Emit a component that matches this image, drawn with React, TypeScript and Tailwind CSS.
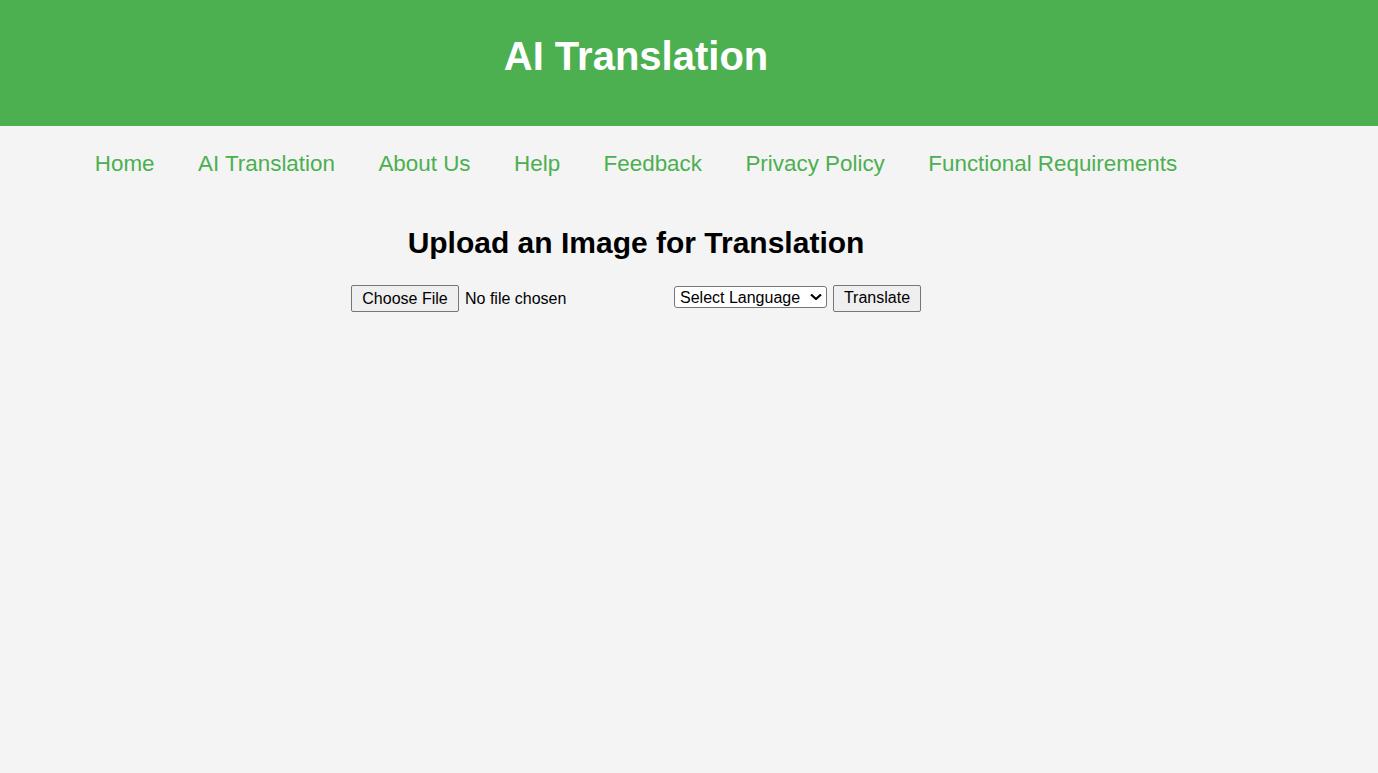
import { useState } from "react";

const navLinks = [
  "Home",
  "AI Translation",
  "About Us",
  "Help",
  "Feedback",
  "Privacy Policy",
  "Functional Requirements",
];

export default function App() {
  const [language, setLanguage] = useState("");

  return (
    <div className="min-h-screen bg-[#f4f4f4] font-['Liberation_Sans',Arial,sans-serif] text-black">
      <header className="h-[126px] bg-[#4caf50] pr-[106px] pt-[33px]">
        <h1 className="text-center text-[40px] font-bold leading-[46px] text-white">
          AI Translation
        </h1>
      </header>

      <nav className="flex justify-center gap-[43.5px] pr-[106px] pt-[25px]">
        {navLinks.map((link) => (
          <a
            key={link}
            href="#"
            className="text-[22.4px] leading-[26px] text-[#4caf50]"
          >
            {link}
          </a>
        ))}
      </nav>

      <main className="pr-[106px]">
        <h2 className="mt-[47.6px] text-center text-[30px] font-bold leading-[35px]">
          Upload an Image for Translation
        </h2>

        <form
          className="mt-[25.4px] flex items-center justify-center"
          onSubmit={(e) => e.preventDefault()}
        >
          <input
            type="file"
            accept="image/*"
            className="h-[27px] w-[318px] text-[16px] leading-[25px] file:mr-[6px] file:h-[27px] file:w-[108px] file:rounded-[2px] file:border file:border-[#767676] file:bg-[#efefef] file:pb-[1px] file:text-[16px] file:text-black"
          />
          <div className="relative ml-[5px]">
            <select
              value={language}
              onChange={(e) => setLanguage(e.target.value)}
              className="h-[22px] w-[153px] appearance-none rounded-[3px] border border-[#767676] bg-white pl-[5px] pt-[1px] text-[16px] leading-[19px]"
            >
              <option value="">Select Language</option>
              <option value="en">English</option>
              <option value="es">Spanish</option>
              <option value="fr">French</option>
              <option value="de">German</option>
              <option value="zh">Chinese</option>
            </select>
            <svg
              className="pointer-events-none absolute right-[5px] top-[8px] h-[6px] w-[12px]"
              viewBox="0 0 12 6"
              fill="none"
              stroke="black"
              strokeWidth="2.2"
            >
              <path d="M1 0.5 L6 5 L11 0.5" />
            </svg>
          </div>
          <button
            type="submit"
            className="ml-[6px] h-[27px] w-[88px] rounded-[2px] border border-[#767676] bg-[#efefef] text-[16px]"
          >
            Translate
          </button>
        </form>
      </main>
    </div>
  );
}
